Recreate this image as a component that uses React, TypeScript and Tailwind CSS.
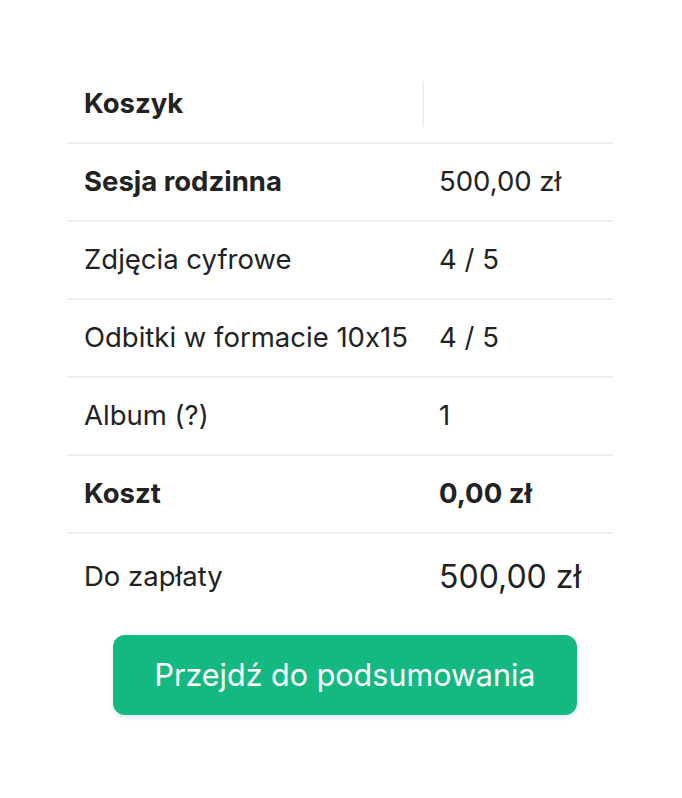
import React from 'react';

const rows = [
  { label: 'Sesja rodzinna', value: '500,00 zł', bold: 'label' },
  { label: 'Zdjęcia cyfrowe', value: '4 / 5' },
  { label: 'Odbitki w formacie 10x15', value: '4 / 5' },
  { label: 'Album (?)', value: '1' },
  { label: 'Koszt', value: '0,00 zł', bold: 'both' },
];

export default function App() {
  return (
    <div
      className="min-h-[798px] bg-white text-[#222222] pt-[66px] pl-[67px] [font-feature-settings:'calt'_0]"
      style={{ fontFamily: 'Inter, "Noto Sans", sans-serif' }}
    >
      <div className="w-[547px]">
        {/* Header */}
        <div className="flex h-[78px] items-center border-b-2 border-[#efefef]">
          <div className="w-[355px] pl-[17px] text-[27.5px] font-bold">Koszyk</div>
          <div className="h-[46px] w-[2px] bg-[#efefef]" />
        </div>

        {rows.map((row) => (
          <div key={row.label} className="flex h-[78px] items-center border-b-2 border-[#efefef]">
            <div className={`w-[356px] pl-[17px] text-[27.5px] ${row.bold ? 'font-bold' : 'font-normal'}`}>
              {row.label}
            </div>
            <div className={`pl-[16px] text-[27.5px] ${row.bold === 'both' ? 'font-bold' : 'font-normal'}`}>
              {row.value}
            </div>
          </div>
        ))}

        {/* Total */}
        <div className="flex h-[78px] items-center pt-[7px]">
          <div className="w-[356px] pl-[17px] text-[27.5px]">Do zapłaty</div>
          <div className="pl-[16px] text-[32px]">500,00 zł</div>
        </div>

        <button className="ml-[46px] mt-[23px] flex h-[80px] w-[464px] items-center justify-center rounded-[12px] bg-[#13b981] text-[30.5px] text-white shadow-[0_3px_4px_rgba(147,197,253,0.3)]">
          Przejdź do podsumowania
        </button>
      </div>
    </div>
  );
}
